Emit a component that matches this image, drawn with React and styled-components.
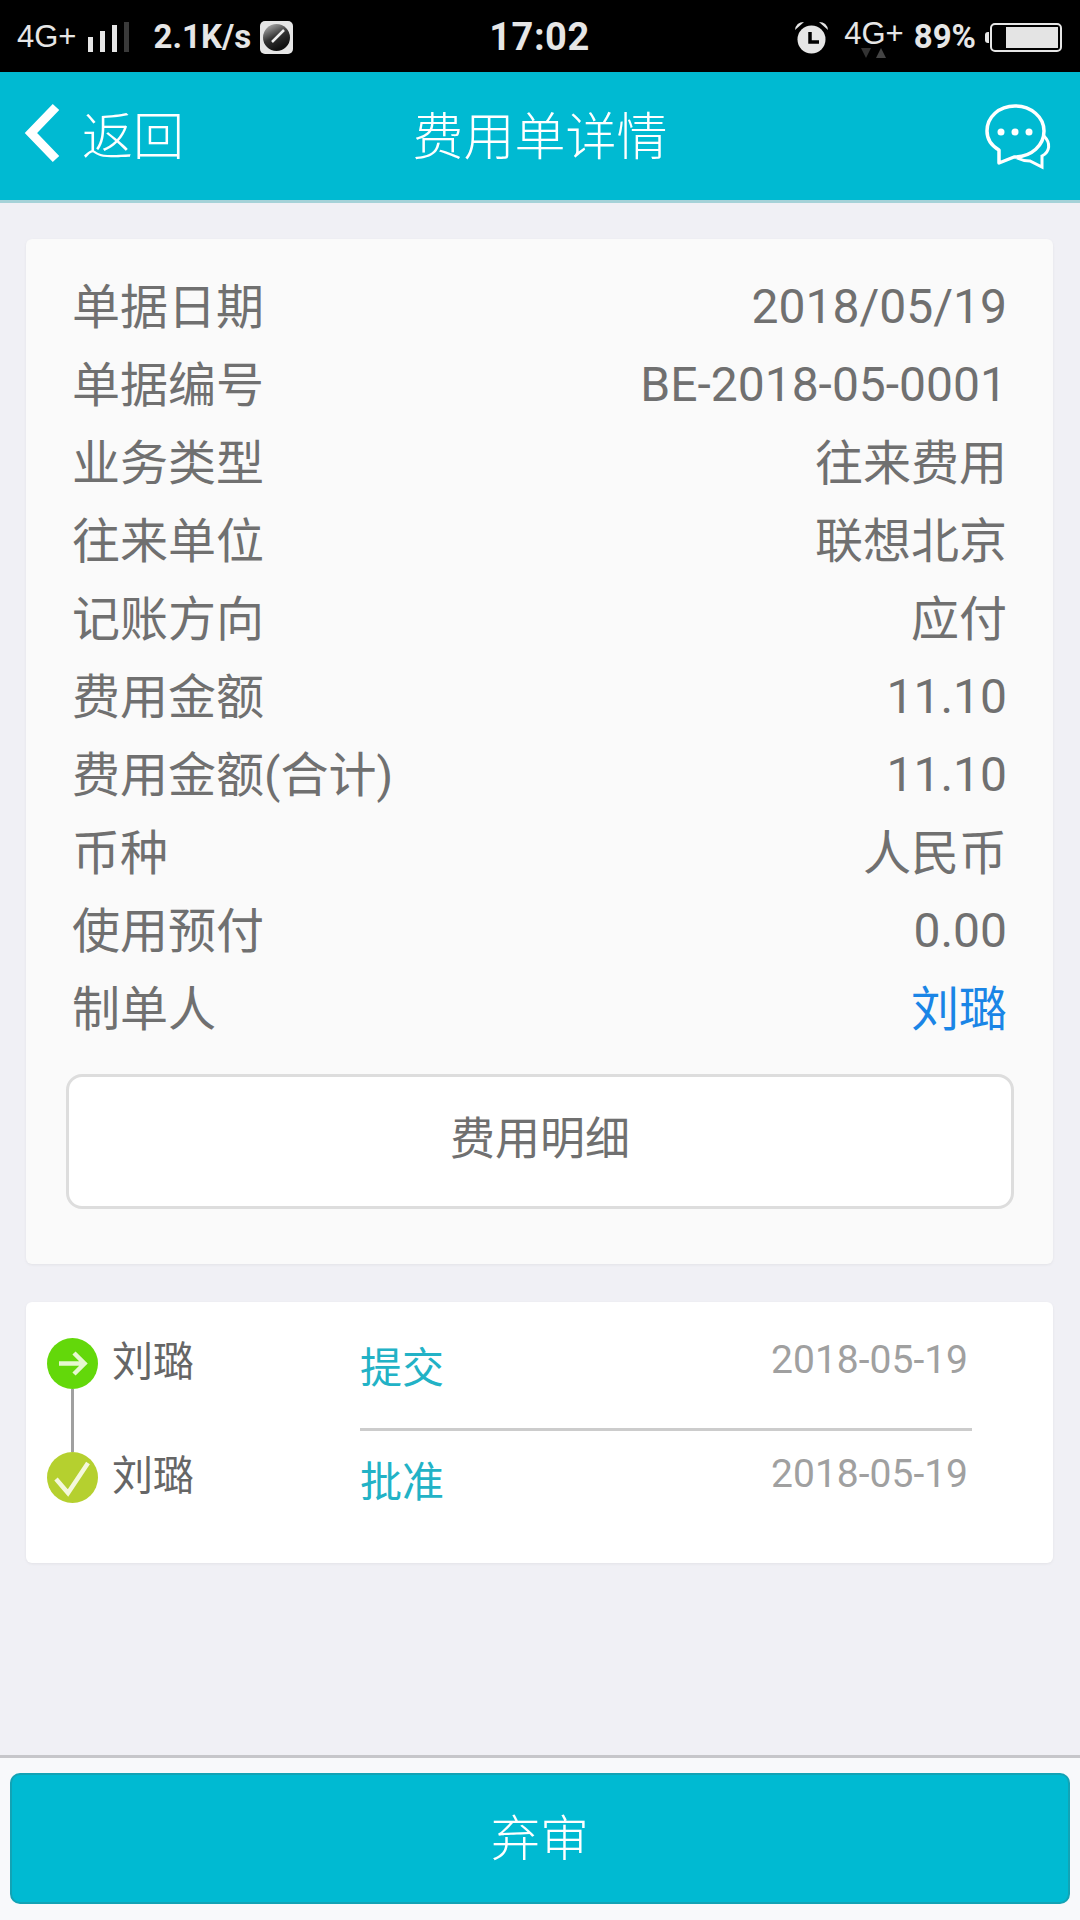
import React from "react"
import styled, { createGlobalStyle } from "styled-components"

const GlobalStyle = createGlobalStyle`
  html, body {
    margin: 0;
    padding: 0;
    background: #f0f0f5;
  }
  * {
    box-sizing: border-box;
  }
`

const fontStack = `Roboto, "Noto Sans CJK SC", sans-serif`
const cjkFirst = `"Noto Sans CJK SC", Roboto, sans-serif`

const Page = styled.div`
  width: 1080px;
  height: 1920px;
  display: flex;
  flex-direction: column;
  background: #f0f0f5;
  font-family: ${fontStack};
  overflow: hidden;
`

const StatusBar = styled.div`
  height: 72px;
  background: #000;
  color: #e6e6e6;
  display: grid;
  grid-template-columns: 1fr auto 1fr;
  align-items: center;
  padding: 2px 18px 0 17px;
`

const StatusGroup = styled.div`
  display: flex;
  align-items: center;
  justify-content: ${(p) => (p.$end ? "flex-end" : "flex-start")};
`

const NetLabel = styled.span`
  font-family: "Liberation Sans", sans-serif;
  font-size: 31px;
  line-height: 34px;
  margin-bottom: ${(p) => (p.$raised ? "7px" : "0")};
`

const NetStack = styled.div`
  position: relative;
  display: flex;
`

const NetArrows = styled.svg`
  position: absolute;
  left: 17px;
  bottom: 0;
`

const StatusStrong = styled.span`
  font-size: ${(p) => p.$size}px;
  font-weight: 700;
  line-height: 34px;
  margin-left: ${(p) => p.$gap}px;
`

const StatusTime = styled.span`
  font-size: 38px;
  font-weight: 700;
  letter-spacing: 0.5px;
`

const Battery = styled.div`
  position: relative;
  width: 72px;
  height: 29px;
  margin-left: 14px;
  border: 2px solid #e6e6e6;
  border-radius: 5px;
  padding: 2px;
  display: flex;
  justify-content: flex-end;

  &::before {
    content: "";
    position: absolute;
    left: -7px;
    top: 7px;
    width: 4px;
    height: 11px;
    border-radius: 3px 0 0 3px;
    background: #e6e6e6;
  }
`

const BatteryFill = styled.div`
  width: 82%;
  height: 100%;
  background: #e4e4e4;
`

const Header = styled.header`
  height: 131px;
  background: #00bad2;
  border-bottom: 3px solid #a5d2d8;
  color: #fff;
  display: grid;
  grid-template-columns: 1fr auto 1fr;
  align-items: center;
  padding: 0 25px 0 25px;
`

const BackLink = styled.div`
  display: flex;
  align-items: center;
  gap: 21px;
  margin-left: -2px;
  font-family: ${cjkFirst};
  font-size: 51px;
  font-weight: 300;
  padding-bottom: 6px;
`

const Title = styled.h1`
  margin: 0;
  padding-bottom: 6px;
  font-family: ${cjkFirst};
  font-size: 51px;
  font-weight: 300;
`

const HeaderAction = styled.div`
  display: flex;
  justify-content: flex-end;
  margin-right: 2px;
`

const Body = styled.main`
  flex: 1;
  padding: 36px 27px 0 26px;
  display: flex;
  flex-direction: column;
  gap: 38px;
`

const Card = styled.section`
  background: ${(p) => (p.$white ? "#fff" : "#fafafa")};
  border-radius: 6px;
  box-shadow: 0 1px 3px rgba(0, 0, 0, 0.06);
`

const DetailCard = styled(Card)`
  height: 1025px;
  padding: 28px 46px 0 46px;
`

const DetailRow = styled.div`
  height: 78px;
  display: flex;
  align-items: center;
  justify-content: space-between;
  font-size: 48px;
  font-weight: 400;
`

const DetailText = styled.span`
  color: ${(p) => (p.$link ? "#1a85e6" : "#707070")};
  padding-bottom: ${(p) => (p.$cjk ? "7px" : "0")};
`

const DetailButton = styled.button`
  display: block;
  width: 948px;
  height: 135px;
  margin: 27px 0 0 -6px;
  padding: 0 0 12px;
  background: #fff;
  border: 3px solid #ddd;
  border-radius: 16px;
  color: #707070;
  font-family: ${cjkFirst};
  font-size: 45px;
  font-weight: 400;
`

const FlowCard = styled(Card)`
  height: 261px;
  padding: 36px 0 0 21px;
`

const FlowRow = styled.div`
  height: 114px;
  display: flex;
`

const Rail = styled.div`
  width: 51px;
  display: flex;
  flex-direction: column;
  align-items: center;
`

const RailLine = styled.div`
  flex: 1;
  width: 3px;
  background: #a0a0a0;
`

const FlowName = styled.div`
  width: 262px;
  padding-left: 14px;
  font-family: ${cjkFirst};
  font-size: 41px;
  font-weight: 400;
  line-height: 40px;
  color: #666;
`

const FlowMain = styled.div`
  width: 612px;
  height: ${(p) => (p.$divided ? "93px" : "auto")};
  border-bottom: ${(p) => (p.$divided ? "3px solid #ccc" : "none")};
  display: flex;
  justify-content: space-between;
`

const FlowAction = styled.span`
  font-family: ${cjkFirst};
  font-size: 42px;
  font-weight: 400;
  line-height: 53px;
  color: #22b2c6;
`

const FlowDate = styled.span`
  font-size: 39px;
  font-weight: 400;
  line-height: 45px;
  color: #a0a0a0;
  margin-right: 4px;
`

const Footer = styled.footer`
  height: 165px;
  background: #f8f9fb;
  border-top: 3px solid #c6c6ca;
  padding: 15px 10px 16px;
`

const AbandonButton = styled.button`
  display: block;
  width: 100%;
  height: 131px;
  padding: 0 0 8px;
  background: #00bad2;
  border: 2px solid #12a3b5;
  border-radius: 10px;
  color: #fff;
  font-family: ${cjkFirst};
  font-size: 49px;
  font-weight: 300;
`

const SignalIcon = () => (
  <svg width="41" height="30" viewBox="0 0 41 30" style={{ marginLeft: 12 }}>
    <rect x="0" y="15" width="5" height="15" fill="#e6e6e6" />
    <rect x="12" y="9" width="5" height="21" fill="#e6e6e6" />
    <rect x="24" y="3" width="5" height="27" fill="#e6e6e6" />
    <rect x="36" y="0" width="5" height="30" fill="#3a3a3a" />
  </svg>
)

const SpeedIcon = () => (
  <svg width="33" height="33" viewBox="0 0 33 33" style={{ marginLeft: 9 }}>
    <defs>
      <linearGradient id="gauge" x1="0.2" y1="0.1" x2="0.6" y2="0.9">
        <stop offset="0" stopColor="#9a9a9a" />
        <stop offset="0.5" stopColor="#333" />
        <stop offset="1" stopColor="#111" />
      </linearGradient>
    </defs>
    <rect width="33" height="33" rx="5" fill="#e6e6e6" />
    <circle cx="16.5" cy="16.5" r="13.5" fill="url(#gauge)" />
    <path d="M12 21 L24 9" stroke="#efefef" strokeWidth="2.5" />
  </svg>
)

const AlarmIcon = () => (
  <svg width="35" height="33" viewBox="0 0 35 33" style={{ marginRight: 15 }}>
    <circle cx="17.5" cy="18.5" r="14" fill="#e6e6e6" />
    <path d="M1 9 Q2 1 10 1 Z M34 9 Q33 1 25 1 Z" fill="#e6e6e6" />
    <path d="M16 11 V21 H25" stroke="#000" strokeWidth="3.5" fill="none" />
  </svg>
)

const ChevronIcon = () => (
  <svg width="38" height="60" viewBox="0 0 38 60">
    <path d="M33 4 L8 30 L33 56" stroke="#fff" strokeWidth="9" fill="none" />
  </svg>
)

const ChatIcon = () => (
  <svg width="69" height="67" viewBox="0 0 69 67" fill="none" stroke="#fff">
    <path
      d="M31 3 C15 3 3 14 3 28 C3 37 8 43 15 47 L15 60 L30 54 C48 54 60 42 60 28 C60 14 47 3 31 3 Z"
      strokeWidth="3.5"
      strokeLinejoin="round"
    />
    <path d="M60 33 C67 40 66 49 58 53 L58 64 L46 58 C41 58 37 57 33 55" strokeWidth="3" />
    <circle cx="17" cy="29" r="3.5" fill="#fff" stroke="none" />
    <circle cx="31" cy="29" r="3.5" fill="#fff" stroke="none" />
    <circle cx="45" cy="29" r="3.5" fill="#fff" stroke="none" />
  </svg>
)

const SubmitDot = () => (
  <svg width="51" height="51" viewBox="0 0 51 51">
    <circle cx="25.5" cy="25.5" r="25.5" fill="#63d80a" />
    <path d="M12 25.5 H37 M27 15 L37.5 25.5 L27 36" stroke="#e6f8d0" strokeWidth="4.5" fill="none" />
  </svg>
)

const ApproveDot = () => (
  <svg width="51" height="51" viewBox="0 0 51 51">
    <circle cx="25.5" cy="25.5" r="25.5" fill="#b5d02f" />
    <path d="M9 27 L21 41 L41 11" stroke="#f4f8dc" strokeWidth="4.5" fill="none" />
  </svg>
)

const details = [
  ["单据日期", "2018/05/19"],
  ["单据编号", "BE-2018-05-0001"],
  ["业务类型", "往来费用"],
  ["往来单位", "联想北京"],
  ["记账方向", "应付"],
  ["费用金额", "11.10"],
  ["费用金额(合计)", "11.10"],
  ["币种", "人民币"],
  ["使用预付", "0.00"],
  ["制单人", "刘璐", true],
]

const hasCjk = (text) => /[\u4e00-\u9fff]/.test(text)

export default function App() {
  return (
    <Page>
      <GlobalStyle />
      <StatusBar>
        <StatusGroup>
          <NetLabel>4G+</NetLabel>
          <SignalIcon />
          <StatusStrong $size={33} $gap={24}>2.1K/s</StatusStrong>
          <SpeedIcon />
        </StatusGroup>
        <StatusTime>17:02</StatusTime>
        <StatusGroup $end>
          <AlarmIcon />
          <NetStack>
            <NetLabel $raised>4G+</NetLabel>
            <NetArrows width="25" height="10" viewBox="0 0 25 10">
              <path d="M0 0 H10 L5 10 Z" fill="#333" />
              <path d="M15 10 H25 L20 0 Z" fill="#444" />
            </NetArrows>
          </NetStack>
          <StatusStrong $size={33} $gap={10}>89%</StatusStrong>
          <Battery>
            <BatteryFill />
          </Battery>
        </StatusGroup>
      </StatusBar>
      <Header>
        <BackLink>
          <ChevronIcon />
          返回
        </BackLink>
        <Title>费用单详情</Title>
        <HeaderAction>
          <ChatIcon />
        </HeaderAction>
      </Header>
      <Body>
        <DetailCard>
          {details.map(([label, value, link]) => (
            <DetailRow key={label}>
              <DetailText $cjk>{label}</DetailText>
              <DetailText $cjk={hasCjk(value)} $link={link}>{value}</DetailText>
            </DetailRow>
          ))}
          <DetailButton>费用明细</DetailButton>
        </DetailCard>
        <FlowCard $white>
          <FlowRow>
            <Rail>
              <SubmitDot />
              <RailLine />
            </Rail>
            <FlowName>刘璐</FlowName>
            <FlowMain $divided>
              <FlowAction>提交</FlowAction>
              <FlowDate>2018-05-19</FlowDate>
            </FlowMain>
          </FlowRow>
          <FlowRow>
            <Rail>
              <ApproveDot />
            </Rail>
            <FlowName>刘璐</FlowName>
            <FlowMain>
              <FlowAction>批准</FlowAction>
              <FlowDate>2018-05-19</FlowDate>
            </FlowMain>
          </FlowRow>
        </FlowCard>
      </Body>
      <Footer>
        <AbandonButton>弃审</AbandonButton>
      </Footer>
    </Page>
  )
}
